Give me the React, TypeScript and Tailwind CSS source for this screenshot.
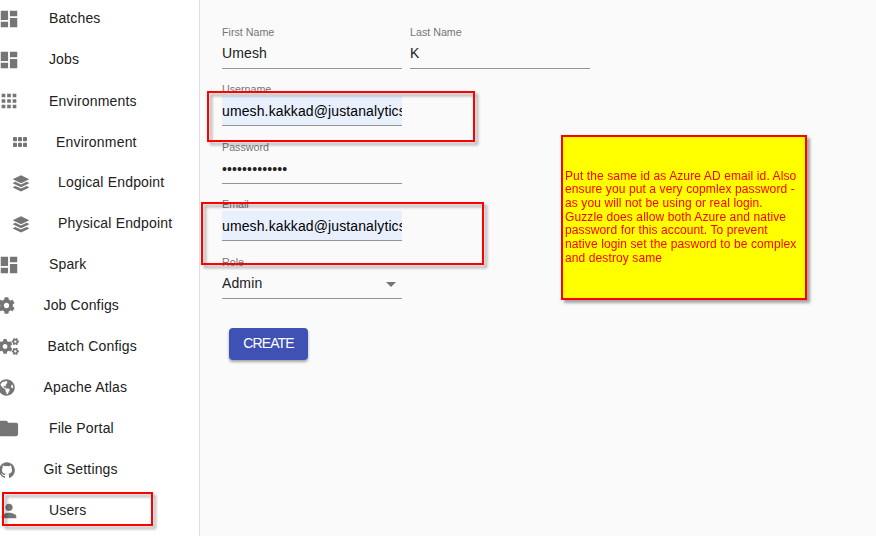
import React from "react";
import { MdDashboard, MdApps, MdFolder, MdPerson } from "react-icons/md";
import { FaCog, FaCogs, FaGlobeAmericas } from "react-icons/fa";
import { IoLogoGithub } from "react-icons/io5";

type Item = { label: string; icon: React.ReactNode; slot: string; text: string };

const ModuleIcon = () => (
  <svg width="14" height="10" viewBox="0 0 14 10" fill="currentColor">
    {[0, 5, 10].map((x) => [0, 5.8].map((y) => <rect key={`${x}-${y}`} x={x} y={y} width="4" height="4.2" rx="0.8" />))}
  </svg>
);

const LayersIcon = () => (
  <svg width="16" height="17" viewBox="0 0 16 17" fill="currentColor">
    <path d="M8 0.2 L15.8 3.9 Q16.1 4.3 15.8 4.6 L8 8.3 L0.2 4.6 Q-0.1 4.3 0.2 3.9 Z" />
    <path d="M0.2 7.8 L2.4 6.8 L8 9.4 L13.6 6.8 L15.8 7.8 Q16.1 8.2 15.8 8.6 L8 12.3 L0.2 8.6 Q-0.1 8.2 0.2 7.8 Z" />
    <path d="M0.2 11.9 L2.4 10.9 L8 13.5 L13.6 10.9 L15.8 11.9 Q16.1 12.3 15.8 12.7 L8 16.4 L0.2 12.7 Q-0.1 12.3 0.2 11.9 Z" />
  </svg>
);

const items: Item[] = [
  { label: "Batches", icon: <MdDashboard size={22} />, slot: "ml-[-2px] w-[51px]", text: "tracking-[0.12px]" },
  { label: "Jobs", icon: <MdDashboard size={22} />, slot: "ml-[-2px] w-[51px]", text: "tracking-[0.12px]" },
  { label: "Environments", icon: <MdApps size={22} />, slot: "ml-[-2px] w-[51px] pt-px", text: "tracking-[0.17px] pt-[2px]" },
  { label: "Environment", icon: <ModuleIcon />, slot: "ml-[13px] w-[43px] pt-px", text: "tracking-[0.19px] pt-[2px]" },
  { label: "Logical Endpoint", icon: <LayersIcon />, slot: "ml-[13px] w-[45px] pt-px", text: "tracking-[0.18px]" },
  { label: "Physical Endpoint", icon: <LayersIcon />, slot: "ml-[13px] w-[45px] pt-px", text: "tracking-[0.18px]" },
  { label: "Spark", icon: <MdDashboard size={22} />, slot: "ml-[-2px] w-[51px]", text: "tracking-[0.15px]" },
  { label: "Job Configs", icon: <FaCog size={17} />, slot: "ml-[-2px] w-[45.5px]", text: "tracking-[0.14px]" },
  { label: "Batch Configs", icon: <FaCogs size={21} />, slot: "ml-[-2px] w-[49.5px]", text: "tracking-[0.17px]" },
  { label: "Apache Atlas", icon: <FaGlobeAmericas size={17} />, slot: "ml-[-2px] w-[45.5px]", text: "tracking-[0.16px]" },
  { label: "File Portal", icon: <MdFolder size={23} />, slot: "ml-[-3px] w-[52px]", text: "tracking-[0.17px]" },
  { label: "Git Settings", icon: <IoLogoGithub size={18} />, slot: "ml-[-2.5px] w-[46px]", text: "tracking-[0.15px]" },
  { label: "Users", icon: <MdPerson size={22} />, slot: "ml-[-2px] w-[51px] pt-px", text: "tracking-[0.15px]" },
];

type FieldProps = { label: string; value: string; height: string; filled?: boolean; select?: boolean; dots?: boolean };

function Field({ label, value, height, filled, select, dots }: FieldProps) {
  return (
    <div className={`w-[180px] ${height}`}>
      <div className="h-[14px] text-[10.7px] leading-[14px] text-[#757575]">{label}</div>
      <div
        className={`flex h-[30px] items-center justify-between overflow-hidden border-b border-[#949494] text-[14px] tracking-[0.12px] whitespace-nowrap ${filled ? "bg-[#e8f0fe] text-black" : "text-[#212121]"}`}
      >
        <span className={dots || filled ? "pt-[2px]" : ""}>{value}</span>
        {select && <span className="mt-0.5 mr-1.5 border-x-[5px] border-t-[5px] border-x-transparent border-t-[#757575]" />}
      </div>
    </div>
  );
}

const frame = "absolute border-2 border-[#ff0000] drop-shadow-[3px_3px_1.5px_rgba(0,0,0,0.35)]";

export default function App() {
  return (
    <div className="relative flex h-[536px] w-[876px] overflow-hidden bg-[#fafafa] font-['Liberation_Sans',Arial,sans-serif]">
      <nav className="-mt-[2px] flex w-[200px] shrink-0 flex-col border-r border-[#e0e0e0] bg-white">
        {items.map((it) => (
          <div key={it.label} className="flex h-[41px] shrink-0 items-center text-[14px] text-[#212121]">
            <span className={`flex shrink-0 items-center text-[#757575] ${it.slot}`}>{it.icon}</span>
            <span className={it.text}>{it.label}</span>
          </div>
        ))}
      </nav>
      <main className="pt-[25px] pl-[22px]">
        <div className="flex gap-2">
          <Field label="First Name" value="Umesh" height="h-[57px]" />
          <Field label="Last Name" value="K" height="h-[57px]" />
        </div>
        <Field label="Username" value="umesh.kakkad@justanalytics.com" height="h-[58px]" filled />
        <Field label="Password" value="•••••••••••••" height="h-[57px]" dots />
        <Field label="Email" value="umesh.kakkad@justanalytics.com" height="h-[58px]" filled />
        <Field label="Role" value="Admin" height="h-[57px]" select />
        <button className="mt-[16px] ml-[7px] h-8 w-[79px] rounded bg-[#3f51b5] pb-px text-[14px] tracking-[-0.9px] text-white shadow-[0_2px_3px_rgba(0,0,0,0.35)]">CREATE</button>
      </main>
      <div className={`${frame} top-[91px] left-[207px] h-[51px] w-[268px]`} />
      <div className={`${frame} top-[202px] left-[201px] h-[63px] w-[283px]`} />
      <div className={`${frame} top-[492px] left-[2px] h-[34px] w-[151px]`} />
      <div className={`${frame} top-[135px] left-[561px] flex h-[165px] w-[246px] items-center bg-[#ffff00] pl-[2px] text-[12px] leading-[13.7px] tracking-[0.11px] whitespace-nowrap text-[#ff0000]`}>
        <p>Put the same id as Azure AD email id. Also<br />ensure you put a very copmlex password -<br />as you will not be using or real login.<br />Guzzle does allow both Azure and native<br />password for this account. To prevent<br />native login set the pasword to be complex<br />and destroy same</p>
      </div>
    </div>
  );
}
